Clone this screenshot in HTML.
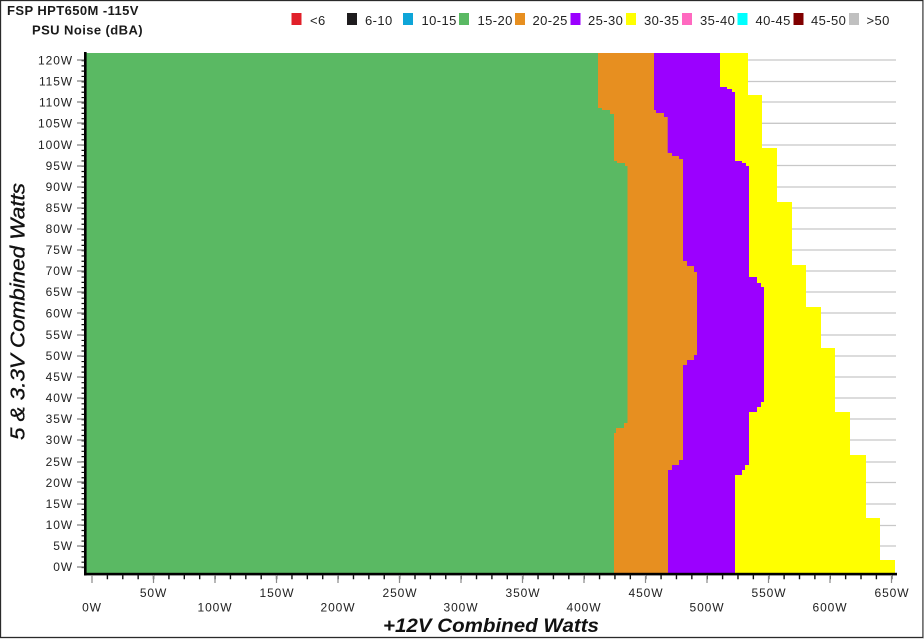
<!DOCTYPE html>
<html><head><meta charset="utf-8"><style>
html,body{margin:0;padding:0;background:#fff}
svg{display:block}
text{font-family:"Liberation Sans",sans-serif;filter:blur(.25px)}
.t{font-weight:bold;font-size:13px;fill:#1a1a1a;letter-spacing:.42px}
.l{font-size:13px;fill:#222;letter-spacing:.4px}
.y{font-size:12px;fill:#222;text-anchor:end;letter-spacing:.9px}
.x{font-size:12px;fill:#222;text-anchor:middle;letter-spacing:.9px}
</style></head><body>
<svg width="924" height="639" viewBox="0 0 924 639" xmlns="http://www.w3.org/2000/svg">
<rect width="924" height="639" fill="#fff"/>
<rect x=".5" y=".5" width="922.5" height="637" fill="none" stroke="#2a2a2a" stroke-width="1.3"/>
<rect x="923.4" y="0" width=".6" height="639" fill="#ddd"/>
<text class="t" x="7" y="15">FSP HPT650M -115V</text>
<text class="t" x="32" y="34.5">PSU Noise (dBA)</text>

<g>
<rect x="291.5" y="13" width="10" height="12" fill="#e1202a"/><text class="l" x="310" y="25">&lt;6</text>
<rect x="347" y="13" width="10" height="12" fill="#1e1c1e"/><text class="l" x="365" y="25">6-10</text>
<rect x="403" y="13" width="10" height="12" fill="#0ea5d8"/><text class="l" x="421.5" y="25">10-15</text>
<rect x="459" y="13" width="10" height="12" fill="#5ab963"/><text class="l" x="477.5" y="25">15-20</text>
<rect x="515" y="13" width="10" height="12" fill="#e78f20"/><text class="l" x="532.5" y="25">20-25</text>
<rect x="570.5" y="13" width="10" height="12" fill="#9b00ff"/><text class="l" x="588" y="25">25-30</text>
<rect x="626" y="13" width="10" height="12" fill="#ffff00"/><text class="l" x="644" y="25">30-35</text>
<rect x="682" y="13" width="10" height="12" fill="#ff69c0"/><text class="l" x="700" y="25">35-40</text>
<rect x="737.5" y="13" width="10" height="12" fill="#00ffff"/><text class="l" x="755.5" y="25">40-45</text>
<rect x="793.5" y="13" width="10" height="12" fill="#800000"/><text class="l" x="811" y="25">45-50</text>
<rect x="849" y="13" width="10" height="12" fill="#c0c0c0"/><text class="l" x="866.5" y="25">&gt;50</text>
</g>

<path fill="none" stroke="#c8c8c8" stroke-width="1.3" d="M86 60H896M86 81.5H896M86 102H896M86 123.3H896M86 145H896M86 165.5H896M86 187H896M86 208H896M86 229H896M86 250H896M86 271H896M86 292H896M86 313H896M86 335H896M86 356H896M86 377H896M86 398H896M86 419H896M86 440H896M86 462H896M86 482.5H896M86 504H896M86 525.5H896M86 546H896"/>

<!-- yellow -->
<path fill="#ffff00" d="M86 53H748V95H762V148H777V202H792V265H806V307H821V348H835V412H850V455H866V518H880V560H895V573H86Z"/>
<!-- purple -->
<path fill="#9b00ff" d="M86 53H720V87H727V89H732V92H735V161H742V163H746V166H749V277H757V283H761V287H764V402H761V407H757V412H749V465H745V470H742V475H735V573H86Z"/>
<!-- orange -->
<path fill="#e78f20" d="M86 53H654V110H656V113H664V117H667.7V153H672V156H679V159H683V261H687V266H694V272H697V355H694V360H687V365H683V460H679V465H672V470H668V573H86Z"/>
<!-- green -->
<path fill="#5ab963" d="M86 53H598V108H602V110H610V114H614V161H617V163H625V166H627.5V423H624V428H616V433H614V573H86Z"/>

<!-- axes -->
<rect x="84" y="52" width="2.6" height="523.5" fill="#000"/>
<rect x="84" y="572.8" width="813" height="2.6" fill="#000"/>

<!-- y ticks -->
<line x1="83" y1="60" x2="83" y2="572" stroke="#111" stroke-width="3" stroke-dasharray="1.2 4.08"/>
<path stroke="#808080" stroke-width="1.2" fill="none" d="M77 60H84M77 81H84M77 102H84M77 123H84M77 145H84M77 166H84M77 187H84M77 208H84M77 229H84M77 250H84M77 271H84M77 292H84M77 313H84M77 335H84M77 356H84M77 377H84M77 398H84M77 419H84M77 440H84M77 462H84M77 482H84M77 504H84M77 525H84M77 546H84M77 567H84"/>

<!-- x ticks -->
<line x1="106.7" y1="577" x2="893" y2="577" stroke="#111" stroke-width="4.5" stroke-dasharray="1.4 13.98"/>
<line x1="91.4" y1="579" x2="893" y2="579" stroke="#8a8a8a" stroke-width="8" stroke-dasharray="1.2 60.3"/>

<!-- y labels -->
<g>
<text class="y" x="73" y="64.5">120W</text>
<text class="y" x="73" y="85.5">115W</text>
<text class="y" x="73" y="106.5">110W</text>
<text class="y" x="73" y="127.5">105W</text>
<text class="y" x="73" y="149">100W</text>
<text class="y" x="73" y="170">95W</text>
<text class="y" x="73" y="191">90W</text>
<text class="y" x="73" y="212">85W</text>
<text class="y" x="73" y="233">80W</text>
<text class="y" x="73" y="254">75W</text>
<text class="y" x="73" y="275">70W</text>
<text class="y" x="73" y="296">65W</text>
<text class="y" x="73" y="317.5">60W</text>
<text class="y" x="73" y="339">55W</text>
<text class="y" x="73" y="360">50W</text>
<text class="y" x="73" y="381">45W</text>
<text class="y" x="73" y="402">40W</text>
<text class="y" x="73" y="423">35W</text>
<text class="y" x="73" y="444">30W</text>
<text class="y" x="73" y="466">25W</text>
<text class="y" x="73" y="487">20W</text>
<text class="y" x="73" y="508">15W</text>
<text class="y" x="73" y="529">10W</text>
<text class="y" x="73" y="550">5W</text>
<text class="y" x="73" y="571">0W</text>
</g>

<!-- x labels -->
<g>
<text class="x" x="92" y="611.5">0W</text>
<text class="x" x="153.5" y="597">50W</text>
<text class="x" x="215" y="611.5">100W</text>
<text class="x" x="277" y="597">150W</text>
<text class="x" x="338" y="611.5">200W</text>
<text class="x" x="400" y="597">250W</text>
<text class="x" x="461" y="611.5">300W</text>
<text class="x" x="523" y="597">350W</text>
<text class="x" x="584" y="611.5">400W</text>
<text class="x" x="646" y="597">450W</text>
<text class="x" x="707" y="611.5">500W</text>
<text class="x" x="769" y="597">550W</text>
<text class="x" x="830" y="611.5">600W</text>
<text class="x" x="892" y="597">650W</text>
</g>

<text x="383" y="632" font-size="19" font-weight="bold" font-style="italic" fill="#111" textLength="216" lengthAdjust="spacingAndGlyphs">+12V Combined Watts</text>
<text transform="translate(24.5,440) rotate(-90)" font-size="20" font-style="italic" fill="#111" stroke="#111" stroke-width=".35" textLength="257" lengthAdjust="spacingAndGlyphs">5 &amp; 3.3V Combined Watts</text>
</svg>
</body></html>
